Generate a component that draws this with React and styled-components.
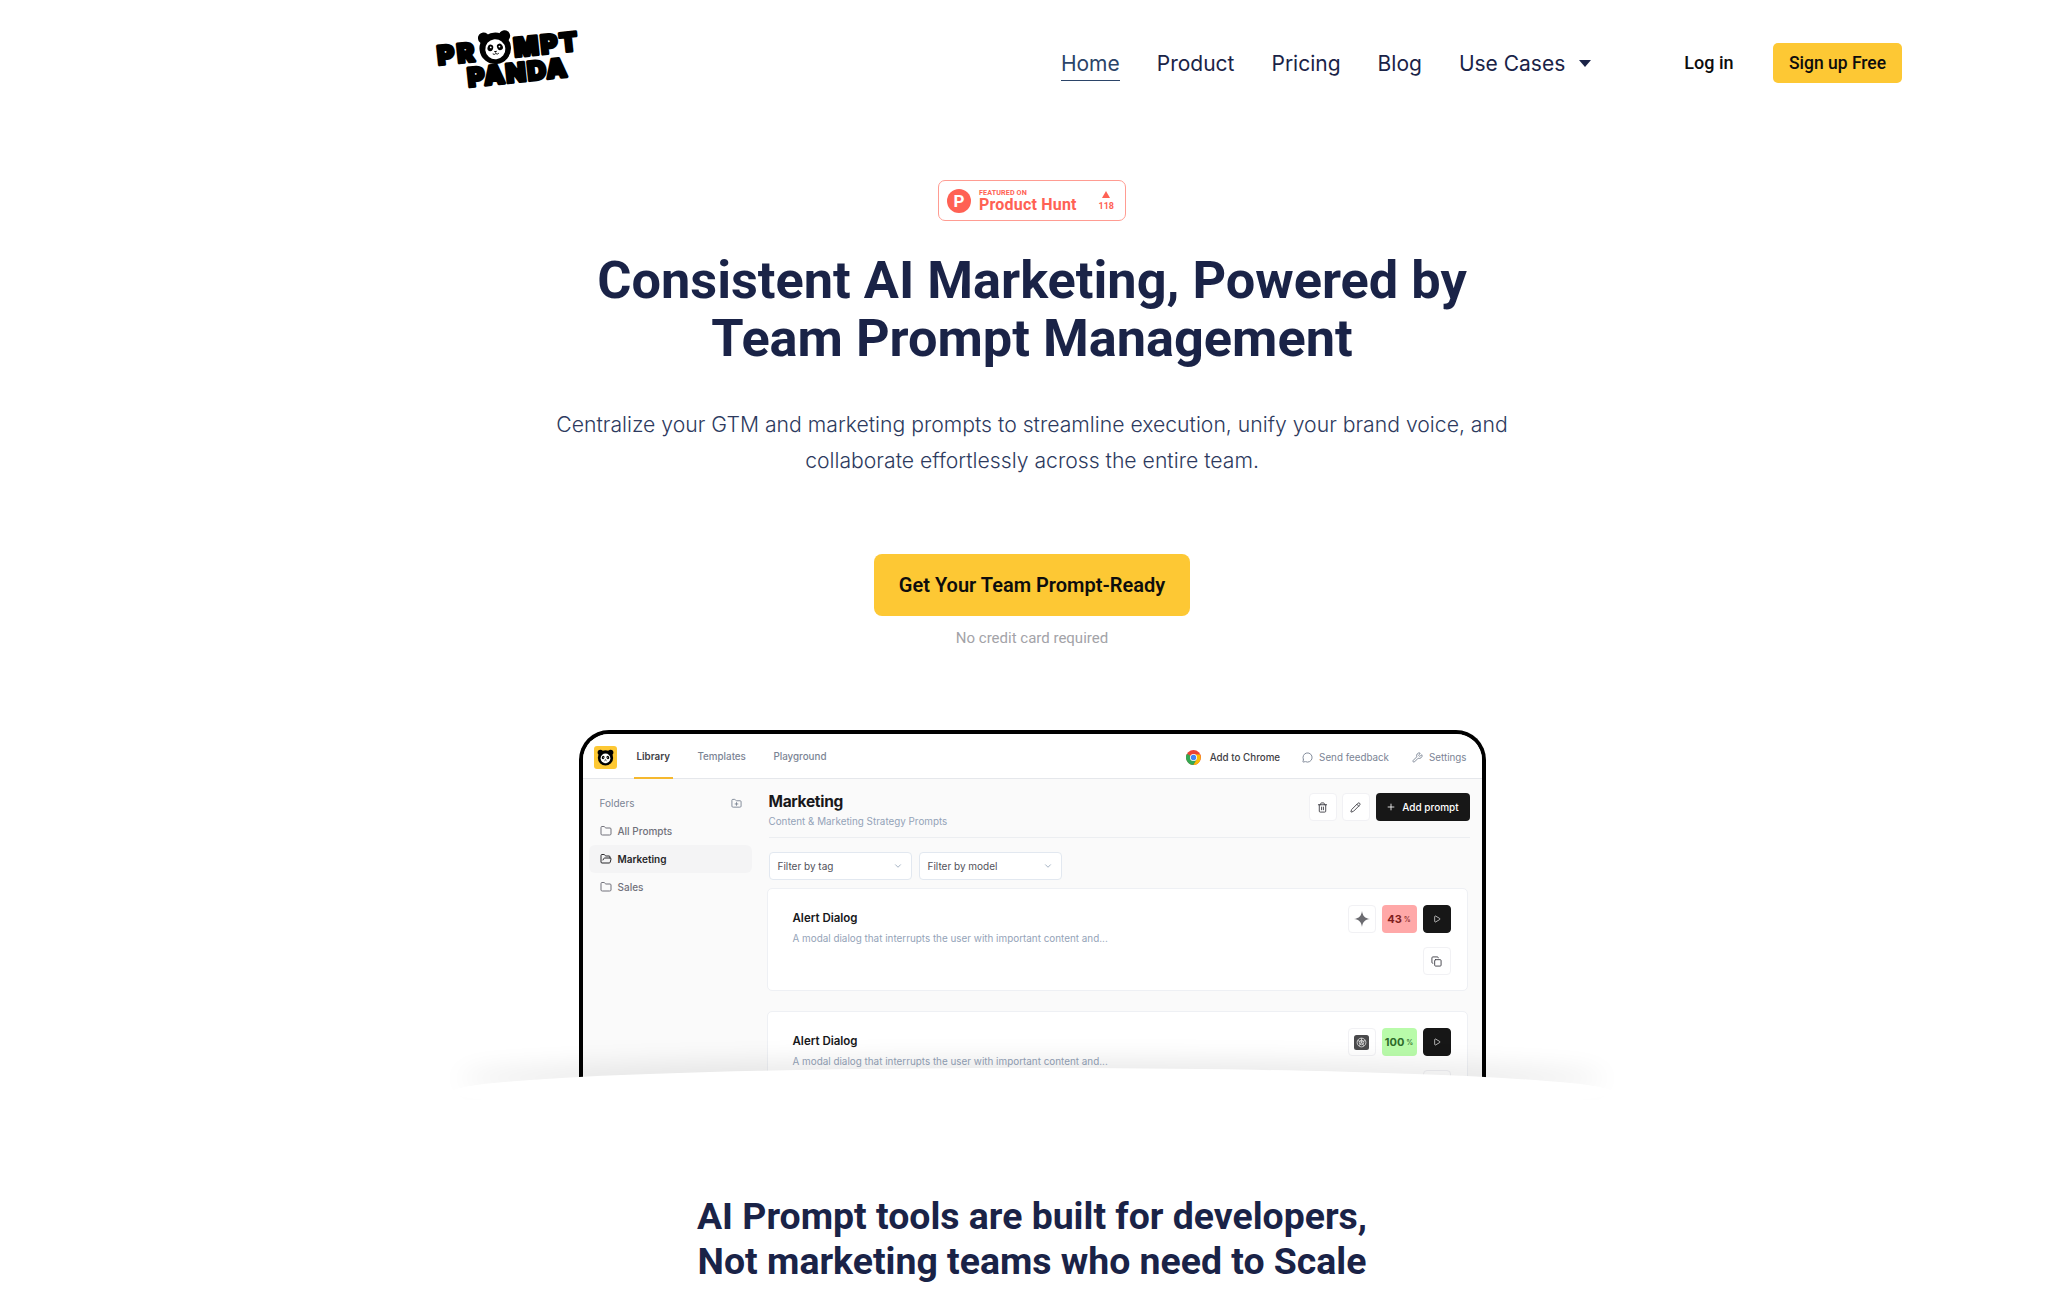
import React from 'react';
import styled, { createGlobalStyle } from 'styled-components';
import { ChevronDown, Copy, Folder, FolderOpen, FolderPlus, MessageCircle, Pencil, Play, Plus, Trash2, Wrench } from 'lucide-react';

const Global = createGlobalStyle`
  html, body { margin: 0; padding: 0; background: #fff; overflow: hidden; }
  body { font-family: Roboto, "Liberation Sans", sans-serif; }
  * { box-sizing: border-box; }
`;

const Page = styled.div`
  width: 2067px;
  height: 1311px;
  overflow: hidden;
  display: flex;
  flex-direction: column;
  align-items: center;
`;

const Header = styled.header`
  width: 100%;
  height: 125px;
  padding: 24px 165px 0 430px;
  display: flex;
  justify-content: space-between;
  align-items: flex-start;
`;

const LogoText = styled.text`
  font-family: Inter, sans-serif;
  font-size: 26px;
  font-weight: 900;
  fill: #000;
  stroke: #000;
  stroke-width: 3px;
  stroke-linejoin: round;
  letter-spacing: ${p => p.$spacing}px;
`;

const Nav = styled.nav`
  display: flex;
  align-items: center;
  margin-top: 19px;
`;

const NavLink = styled.a`
  font-family: Inter, sans-serif;
  font-size: 21px;
  font-weight: 400;
  line-height: 35px;
  height: 35px;
  margin-right: 37px;
  color: ${p => (p.$active ? '#2b4468' : '#1a2347')};
  border-bottom: ${p => (p.$active ? '1.5px solid #2b4468' : 'none')};
`;

const Caret = styled.span`
  width: 0;
  height: 0;
  margin: 0 93.5px 0 -23.5px;
  border-left: 6px solid transparent;
  border-right: 6px solid transparent;
  border-top: 7px solid #1a2347;
`;

const Login = styled.a`
  font-size: 18px;
  font-weight: 500;
  color: #0d0d0d;
  margin: -2px 39.5px 0 0;
`;

const SignUp = styled.a`
  width: 129px;
  height: 40px;
  display: flex;
  align-items: center;
  justify-content: center;
  background: #fdc834;
  border-radius: 5px;
  font-size: 17.5px;
  font-weight: 500;
  color: #0d0d0d;
`;

const Hero = styled.section`
  display: flex;
  flex-direction: column;
  align-items: center;
  margin: 55px 3px 0 0;
`;

const Badge = styled.div`
  width: 188px;
  height: 41px;
  border: 1.5px solid #ff9c92;
  border-radius: 7px;
  padding: 0 7px 0 8px;
  display: flex;
  align-items: center;
  color: #ff6154;
  font-family: Roboto, sans-serif;
`;

const BadgeCircle = styled.span`
  width: 24px;
  height: 24px;
  border-radius: 50%;
  background: #ff6154;
  color: #fff;
  font-size: 17px;
  font-weight: 700;
  display: flex;
  align-items: center;
  justify-content: center;
  margin-right: 8px;
`;

const BadgeText = styled.div`
  display: flex;
  flex-direction: column;
  flex: 1;
`;

const BadgeSmall = styled.span`
  font-size: 7.2px;
  font-weight: 700;
  letter-spacing: 0.1px;
  line-height: 7px;
`;

const BadgeName = styled.span`
  font-size: 16px;
  font-weight: 700;
  line-height: 17px;
  letter-spacing: 0.2px;
`;

const BadgeVotes = styled.div`
  display: flex;
  flex-direction: column;
  align-items: center;
  font-size: 9px;
  font-weight: 700;
  line-height: 10px;
  margin-right: 4px;
  gap: 3px;
`;

const Triangle = styled.span`
  width: 0;
  height: 0;
  border-left: 4px solid transparent;
  border-right: 4px solid transparent;
  border-bottom: 7px solid #ff6154;
`;

const Title = styled.h1`
  margin: 30px 0 0;
  font-size: 52.3px;
  line-height: 58px;
  font-weight: 700;
  color: #1a2347;
  text-align: center;
`;

const Sub = styled.p`
  margin: 39px 0 0;
  width: 1000px;
  font-family: Inter, sans-serif;
  font-size: 21.2px;
  font-weight: 300;
  line-height: 36px;
  color: #2d3a5e;
  text-align: center;
`;

const Cta = styled.a`
  margin-top: 76px;
  width: 316px;
  height: 62px;
  background: #fdc834;
  border-radius: 8px;
  display: flex;
  align-items: center;
  justify-content: center;
  font-size: 20px;
  font-weight: 600;
  color: #0d0d0d;
`;

const Note = styled.div`
  margin-top: 13px;
  font-size: 15px;
  line-height: 19px;
  color: #a3a3a8;
`;

const Stage = styled.div`
  position: relative;
  width: 1200px;
  margin-top: 82px;
  display: flex;
  justify-content: center;
`;

const Frame = styled.div`
  width: 907px;
  height: 349px;
  border: 4px solid #000;
  border-bottom: none;
  border-radius: 30px 30px 0 0;
  background: #fafafa;
  overflow: hidden;
  font-family: Inter, sans-serif;
  display: flex;
  flex-direction: column;
`;

const Fade = styled.div`
  position: absolute;
  left: 0;
  right: 0;
  top: 290px;
  height: 80px;
  overflow: hidden;
  pointer-events: none;
`;

const Arc = styled.div`
  position: absolute;
  left: 20px;
  top: 48px;
  width: 1160px;
  height: 48px;
  border-radius: 50%;
  background: #fff;
  box-shadow: 0 -14px 26px -6px rgba(0, 0, 0, 0.09);
`;

const AppBar = styled.div`
  height: 45px;
  flex: none;
  background: #fff;
  border-bottom: 1px solid #e5e7eb;
  padding: 2px 15px 0 11px;
  display: flex;
  align-items: center;
`;

const AppIcon = styled.div`
  width: 23px;
  height: 23px;
  border-radius: 3px;
  background: #fdc834;
  display: flex;
  align-items: center;
  justify-content: center;
  margin-right: 17px;
`;

const Tab = styled.span`
  font-size: 9.8px;
  font-weight: ${p => (p.$active ? 600 : 500)};
  color: ${p => (p.$active ? '#3f3f46' : '#7b8494')};
  margin-right: 21.5px;
  height: 43px;
  line-height: 42px;
  padding: 0 3px;
  border-bottom: ${p => (p.$active ? '2px solid #f5b82e' : 'none')};
`;

const Spacer = styled.div`
  flex: 1;
`;

const BarLink = styled.span`
  display: flex;
  align-items: center;
  gap: ${p => (p.$dark ? 9 : 6)}px;
  font-size: 9.8px;
  font-weight: ${p => (p.$dark ? 500 : 400)};
  color: ${p => (p.$dark ? '#3f3f46' : '#7b8494')};
  margin-left: ${p => p.$gap}px;
  white-space: nowrap;
`;

const Body = styled.div`
  flex: 1;
  display: flex;
  min-height: 0;
`;

const Sidebar = styled.aside`
  width: 186px;
  flex: none;
  padding: 14px 0 0 6px;
`;

const SideHead = styled.div`
  width: 163px;
  height: 20px;
  padding: 0 10px 0 11px;
  display: flex;
  align-items: center;
  justify-content: space-between;
  font-size: 10px;
  color: #7b8494;
  margin-bottom: 4px;
`;

const FolderRow = styled.div`
  width: 163px;
  height: 28px;
  padding-left: 11px;
  display: flex;
  align-items: center;
  gap: 6px;
  border-radius: 6px;
  font-size: 10px;
  font-weight: ${p => (p.$active ? 600 : 500)};
  color: ${p => (p.$active ? '#27272a' : '#71717a')};
  background: ${p => (p.$active ? '#f4f4f5' : 'transparent')};
`;

const Main = styled.main`
  flex: 1;
  padding: 13px 12px 0 0;
  min-width: 0;
`;

const MainHead = styled.div`
  height: 46px;
  border-bottom: 1px solid #eceef1;
  display: flex;
  justify-content: space-between;
`;

const PageTitle = styled.div`
  font-size: 15.5px;
  font-weight: 700;
  line-height: 20px;
  letter-spacing: -0.3px;
  color: #18181b;
`;

const PageSub = styled.div`
  font-size: 9.85px;
  line-height: 15px;
  margin-top: 2px;
  color: #94a3b8;
`;

const Actions = styled.div`
  display: flex;
  gap: 5px;
  margin-top: 1px;
`;

const IconBox = styled.span`
  width: 28px;
  height: 28px;
  border-radius: 4px;
  background: ${p => (p.$dark ? '#171717' : '#fff')};
  border: 1px solid ${p => (p.$dark ? '#171717' : '#f1f1f4')};
  color: ${p => (p.$dark ? '#fff' : '#3f3f46')};
  display: flex;
  align-items: center;
  justify-content: center;
  flex: none;
`;

const AddButton = styled.span`
  width: 94px;
  height: 28px;
  margin-left: 1px;
  border-radius: 4px;
  background: #171717;
  color: #fff;
  font-size: 10px;
  font-weight: 500;
  display: flex;
  align-items: center;
  justify-content: center;
  gap: 6px;
`;

const Filters = styled.div`
  display: flex;
  gap: 7px;
  margin-top: 14px;
`;

const FilterSelect = styled.div`
  width: 143px;
  height: 28px;
  padding: 0 8px;
  background: #fff;
  border: 1px solid #e2e8f0;
  border-radius: 4px;
  display: flex;
  align-items: center;
  justify-content: space-between;
  font-size: 10px;
  color: #52525b;
`;

const Card = styled.div`
  width: 701px;
  height: 103px;
  margin: 8px 0 20px -2px;
  padding: 16px 16px 0 25px;
  background: #fff;
  border: 1px solid #eef0f4;
  border-radius: 5px;
  display: flex;
  justify-content: space-between;
`;

const CardTitle = styled.div`
  font-size: 11.5px;
  font-weight: 600;
  line-height: 14px;
  margin-top: 6px;
  color: #18181b;
`;

const CardDesc = styled.div`
  font-size: 9.9px;
  line-height: 14px;
  margin-top: 6px;
  color: #94a3b8;
`;

const CardSide = styled.div`
  display: flex;
  flex-direction: column;
  align-items: flex-end;
  gap: 14px;
`;

const CardRow = styled.div`
  display: flex;
  gap: 6px;
`;

const Score = styled.span`
  width: 35px;
  height: 28px;
  border-radius: 4px;
  background: ${p => (p.$good ? '#b9fbaa' : '#ffa8a8')};
  color: ${p => (p.$good ? '#2f6b2a' : '#7f1d1d')};
  font-size: 11px;
  font-weight: 700;
  display: flex;
  align-items: center;
  justify-content: center;
  gap: 2px;
`;

const Percent = styled.small`
  font-size: 7px;
  font-weight: 500;
`;

const Section = styled.h2`
  margin: 115px 3px 0 0;
  font-size: 37.4px;
  line-height: 45px;
  font-weight: 700;
  color: #1a2347;
  text-align: center;
`;

const PandaFace = ({ size, x, y }) => (
  <svg x={x} y={y} width={size} height={size} viewBox="0 0 40 40">
    <circle cx="8" cy="8" r="6.5" fill="#000" />
    <circle cx="32" cy="8" r="6.5" fill="#000" />
    <circle cx="20" cy="21" r="18" fill="#000" />
    <circle cx="20" cy="22" r="11.5" fill="#fff" />
    <ellipse cx="14.5" cy="20" rx="3.2" ry="3.8" fill="#000" transform="rotate(25 14.5 20)" />
    <ellipse cx="25.5" cy="20" rx="3.2" ry="3.8" fill="#000" transform="rotate(-25 25.5 20)" />
    <circle cx="15" cy="19.5" r="1" fill="#fff" />
    <circle cx="25" cy="19.5" r="1" fill="#fff" />
    <path d="M18 24h4l-2 2z" fill="#000" />
    <path d="M16.5 27q1.8 1.6 3.5 0q1.7 1.6 3.5 0" fill="none" stroke="#000" strokeWidth="1" />
  </svg>
);

const Logo = () => (
  <svg width="156" height="72" viewBox="0 0 156 72">
    <g transform="rotate(-6 75 36)">
      <LogoText x="8" y="34" $spacing={3}>PR</LogoText>
      <PandaFace x={49} y={5} size={35} />
      <LogoText x="85" y="34" $spacing={2}>MPT</LogoText>
      <LogoText x="36" y="59" $spacing={1.5}>PANDA</LogoText>
    </g>
  </svg>
);

const ChromeIcon = () => (
  <svg width="15" height="15" viewBox="0 0 24 24">
    <circle cx="12" cy="12" r="12" fill="#ea4335" />
    <path d="M12 12L1.6 6A12 12 0 0 0 12 24l5.2-9z" fill="#34a853" />
    <path d="M12 7h10.4A12 12 0 0 1 12 24l5.2-9z" fill="#fbbc05" />
    <circle cx="12" cy="12" r="5.6" fill="#fff" />
    <circle cx="12" cy="12" r="4.3" fill="#4285f4" />
  </svg>
);

const Sparkle = () => (
  <svg width="16" height="16" viewBox="0 0 24 24">
    <path d="M12 0c1 7 4 11 12 12c-8 1-11 5-12 12c-1-7-4-11-12-12c8-1 11-5 12-12z" fill="#6b6b70" />
  </svg>
);

const GptIcon = () => (
  <svg width="15" height="15" viewBox="0 0 24 24">
    <rect width="24" height="24" rx="4" fill="#4a4a4c" />
    <g fill="none" stroke="#d8d8d8" strokeWidth="1.4">
      <circle cx="12" cy="12" r="7" />
      <circle cx="12" cy="12" r="3.6" />
      <path d="M12 5v7M6 8.5l6 3.5M18 8.5l-6 3.5M8 17.5l4-5.5M16 17.5l-4-5.5" />
    </g>
  </svg>
);

const PromptCard = ({ score, good, model }) => (
  <Card>
    <div>
      <CardTitle>Alert Dialog</CardTitle>
      <CardDesc>A modal dialog that interrupts the user with important content and...</CardDesc>
    </div>
    <CardSide>
      <CardRow>
        <IconBox>{model}</IconBox>
        <Score $good={good}>{score}<Percent>%</Percent></Score>
        <IconBox $dark><Play size={8} /></IconBox>
      </CardRow>
      <IconBox><Copy size={11} /></IconBox>
    </CardSide>
  </Card>
);

export default function App() {
  return (
    <Page>
      <Global />
      <Header>
        <Logo />
        <Nav>
          <NavLink $active>Home</NavLink>
          <NavLink>Product</NavLink>
          <NavLink>Pricing</NavLink>
          <NavLink>Blog</NavLink>
          <NavLink>Use Cases</NavLink>
          <Caret />
          <Login>Log in</Login>
          <SignUp>Sign up Free</SignUp>
        </Nav>
      </Header>

      <Hero>
        <Badge>
          <BadgeCircle>P</BadgeCircle>
          <BadgeText>
            <BadgeSmall>FEATURED ON</BadgeSmall>
            <BadgeName>Product Hunt</BadgeName>
          </BadgeText>
          <BadgeVotes><Triangle />118</BadgeVotes>
        </Badge>
        <Title>Consistent AI Marketing, Powered by<br />Team Prompt Management</Title>
        <Sub>Centralize your GTM and marketing prompts to streamline execution, unify your brand voice, and collaborate effortlessly across the entire team.</Sub>
        <Cta>Get Your Team Prompt-Ready</Cta>
        <Note>No credit card required</Note>

        <Stage>
          <Frame>
            <AppBar>
              <AppIcon><PandaFace size={17} /></AppIcon>
              <Tab $active>Library</Tab>
              <Tab>Templates</Tab>
              <Tab>Playground</Tab>
              <Spacer />
              <BarLink $dark><ChromeIcon />Add to Chrome</BarLink>
              <BarLink $gap={22}><MessageCircle size={11} />Send feedback</BarLink>
              <BarLink $gap={23}><Wrench size={11} />Settings</BarLink>
            </AppBar>
            <Body>
              <Sidebar>
                <SideHead>Folders<FolderPlus size={11} /></SideHead>
                <FolderRow><Folder size={12} />All Prompts</FolderRow>
                <FolderRow $active><FolderOpen size={12} />Marketing</FolderRow>
                <FolderRow><Folder size={12} />Sales</FolderRow>
              </Sidebar>
              <Main>
                <MainHead>
                  <div>
                    <PageTitle>Marketing</PageTitle>
                    <PageSub>Content &amp; Marketing Strategy Prompts</PageSub>
                  </div>
                  <Actions>
                    <IconBox><Trash2 size={11} /></IconBox>
                    <IconBox><Pencil size={11} /></IconBox>
                    <AddButton><Plus size={10} />Add prompt</AddButton>
                  </Actions>
                </MainHead>
                <Filters>
                  <FilterSelect>Filter by tag<ChevronDown size={10} color="#94a3b8" /></FilterSelect>
                  <FilterSelect>Filter by model<ChevronDown size={10} color="#94a3b8" /></FilterSelect>
                </Filters>
                <PromptCard score="43" model={<Sparkle />} />
                <PromptCard score="100" good model={<GptIcon />} />
              </Main>
            </Body>
          </Frame>
          <Fade><Arc /></Fade>
        </Stage>
      </Hero>

      <Section>AI Prompt tools are built for developers,<br />Not marketing teams who need to Scale</Section>
    </Page>
  );
}
